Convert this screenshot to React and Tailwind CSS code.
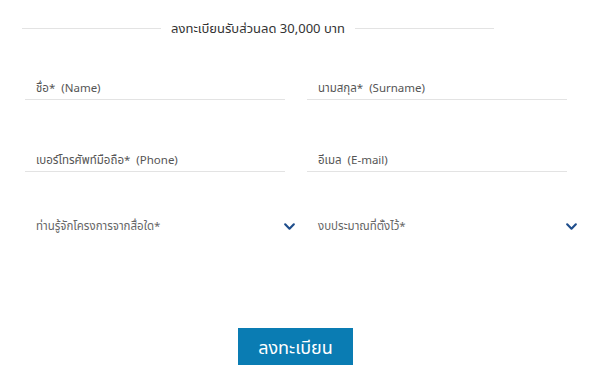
import React from "react";

const ChevronDown = () => (
  <svg xmlns="http://www.w3.org/2000/svg" viewBox="0 0 24 24" fill="none" stroke="#1f4e8c" strokeWidth={4} strokeLinecap="round" strokeLinejoin="round" className="w-[13px] h-[13px] -mr-[11px]">
    <path d="M4 8l8 8 8-8" />
  </svg>
);

const Field = ({ label }) => (
  <div className="border-b border-[#e3e3e3] pb-[2px] pl-[11px] h-[40px] flex items-end">
    <span className="text-[11.5px] text-[#555] leading-[18px] whitespace-pre">{label}</span>
  </div>
);

const SelectField = ({ label }) => (
  <div className="flex items-center justify-between pl-[11px] h-[30px]">
    <span className="text-[11.5px] text-[#666]">{label}</span>
    <ChevronDown />
  </div>
);

const App = () => {
  return (
    <div className="w-[600px] h-[385px] bg-white overflow-hidden" style={{ fontFamily: '"Noto Sans", "Noto Sans Thai", "DejaVu Sans", sans-serif' }}>
      <div className="flex items-center pl-[22px] w-[494px] pt-[19px]">
        <div className="flex-1 border-t border-[#e3e3e3]" />
        <div className="px-[10px] text-[13px] text-[#333] leading-[18px]">ลงทะเบียนรับส่วนลด 30,000 บาท</div>
        <div className="flex-1 border-t border-[#e3e3e3]" />
      </div>

      <div className="pl-[25px] w-[567px] mt-[23px] grid grid-cols-2 gap-x-[22px] gap-y-[32px]">
        <Field label="ชื่อ*  (Name)" />
        <Field label="นามสกุล*  (Surname)" />
        <Field label="เบอร์โทรศัพท์มือถือ*  (Phone)" />
        <Field label="อีเมล  (E-mail)" />
        <div className="mt-[7px]"><SelectField label="ท่านรู้จักโครงการจากสื่อใด*" /></div>
        <div className="mt-[7px]"><SelectField label="งบประมาณที่ตั้งไว้*" /></div>
      </div>

      <div className="flex justify-center pr-[9px] mt-[87px]">
        <button type="button" className="w-[115px] h-[37px] bg-[#0a7cb3] text-white text-[18px] leading-none">ลงทะเบียน</button>
      </div>
    </div>
  );
};

export default App;
